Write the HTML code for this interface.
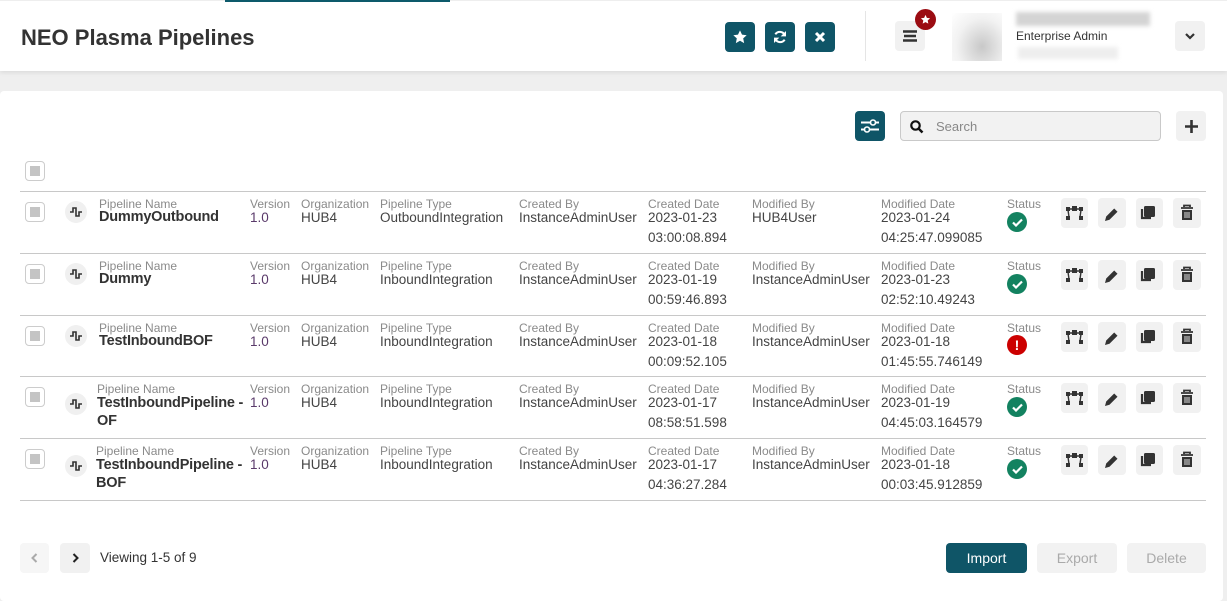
<!DOCTYPE html>
<html><head><meta charset="utf-8"><style>
*{box-sizing:border-box;margin:0;padding:0}
body{width:1227px;height:593px;background:#efefef;font-family:"Liberation Sans",sans-serif;position:relative;overflow:hidden;color:#333}
.hdr{position:absolute;left:0;top:1px;width:1227px;height:70px;background:#fff;box-shadow:0 2px 4px rgba(0,0,0,.08)}
.tl{position:absolute;left:225px;top:0;width:225px;height:2px;background:#0d5a6b}
h1{position:absolute;left:21px;top:24px;font-size:22px;font-weight:bold;color:#333}
.tb{position:absolute;top:21px;width:30px;height:30px;border-radius:4px;background:#0f5567;display:flex;align-items:center;justify-content:center}
.gb{position:absolute;background:#f1f1f1;border-radius:4px;display:flex;align-items:center;justify-content:center}
.card{position:absolute;left:0;top:91px;width:1223px;height:510px;background:#fff;border-radius:4px}
.a{position:absolute;white-space:nowrap}
.l{font-size:12px;color:#8a8a8a}
.v{font-size:13.5px;color:#444;line-height:20px}
.n{font-size:14.5px;color:#333;font-weight:bold;letter-spacing:-.2px}
.hr{position:absolute;left:20px;width:1186px;height:1px;background:#c8c8c8}
.cb{position:absolute;left:25px;width:20px;height:20px;border:1px solid #ccc;border-radius:4px;background:#fff}
.cb:after{content:"";position:absolute;left:4px;top:4px;width:10px;height:10px;background:#c4c4c4}
.ic{position:absolute;width:22px;height:22px;border-radius:50%;background:#f0f0f0;display:flex;align-items:center;justify-content:center}
.ok{position:absolute;left:1007px;width:20px;height:20px;border-radius:50%;background:#138260;display:flex;align-items:center;justify-content:center}
.er{position:absolute;left:1007px;width:20px;height:20px;border-radius:50%;background:#c00;color:#fff;font-weight:bold;font-size:14px;text-align:center;line-height:20px}
.ver{color:#5a3a6a}
</style></head><body>
<div class="hdr">
<h1>NEO Plasma Pipelines</h1>
<div class="tb" style="left:725px"><svg width="16" height="16" viewBox="0 0 24 24"><path fill="#fff" d="M12 2l3 6.5 7 .8-5.2 4.8 1.4 7L12 17.6 5.8 21.1l1.4-7L2 9.3l7-.8z"/></svg></div>
<div class="tb" style="left:765px"><svg width="16" height="16" viewBox="0 0 24 24" fill="none" stroke="#fff" stroke-width="3"><path d="M19 9A8 8 0 0 0 5 8M5 15a8 8 0 0 0 14 1"/><path fill="#fff" stroke="none" d="M21 3v8h-8zM3 21v-8h8z"/></svg></div>
<div class="tb" style="left:805px"><svg width="12" height="12" viewBox="0 0 12 12" stroke="#fff" stroke-width="3"><path d="M2 2l8 8M10 2l-8 8"/></svg></div>
<div style="position:absolute;left:865px;top:10px;width:1px;height:50px;background:#e5e5e5"></div>
<div class="gb" style="left:895px;top:20px;width:30px;height:30px"><svg width="14" height="12"><path d="M0 1.5h14M1 6h12M0 10.5h14" stroke="#333" stroke-width="2.5"/></svg></div>
<div style="position:absolute;left:915px;top:8px;width:21px;height:21px;border-radius:50%;background:#9b0c12;display:flex;align-items:center;justify-content:center"><svg width="11" height="11" viewBox="0 0 24 24"><path fill="#fff" d="M12 2l3 6.5 7 .8-5.2 4.8 1.4 7L12 17.6 5.8 21.1l1.4-7L2 9.3l7-.8z"/></svg></div>
<div style="position:absolute;left:952px;top:12px;width:50px;height:48px;background:radial-gradient(ellipse at 60% 70%,#c8c8c8,#f2f2f2 60%,#fff)"></div>
<div style="position:absolute;left:1016px;top:11px;width:134px;height:14px;background:#d4d4d4;filter:blur(2px)"></div>
<div class="a" style="left:1016px;top:28px;font-size:12px;color:#333">Enterprise Admin</div>
<div style="position:absolute;left:1018px;top:46px;width:100px;height:12px;background:#eee;filter:blur(2px)"></div>
<div class="gb" style="left:1175px;top:20px;width:30px;height:30px"><svg width="10" height="7"><path d="M1 1l4 4 4-4" stroke="#333" stroke-width="2.2" fill="none"/></svg></div>
</div>
<div class="tl"></div>
<div class="card">
<div class="tb" style="left:855px;top:20px"><svg width="18" height="14"><path d="M0 3.5h18M0 10.5h18" stroke="#fff" stroke-width="2"/><circle cx="12" cy="3.5" r="2.5" fill="#0f5567" stroke="#fff" stroke-width="1.6"/><circle cx="6" cy="10.5" r="2.5" fill="#0f5567" stroke="#fff" stroke-width="1.6"/></svg></div>
<div style="position:absolute;left:900px;top:20px;width:261px;height:30px;border:1px solid #c9c9c9;border-radius:4px;background:#f2f2f2"><svg style="position:absolute;left:9px;top:8px" width="14" height="14"><circle cx="5.5" cy="5.5" r="4.2" stroke="#111" stroke-width="2.2" fill="none"/><path d="M8.5 8.5l4 4" stroke="#111" stroke-width="2.5"/></svg><span class="a" style="left:35px;top:7px;font-size:13px;color:#888">Search</span></div>
<div class="gb" style="left:1176px;top:20px;width:30px;height:30px"><svg width="13" height="13"><path d="M6.5 0v13M0 6.5h13" stroke="#333" stroke-width="2.6"/></svg></div>
<div class="cb" style="top:70px"></div>
</div>

<div class="hr" style="top:191px"></div>
<div class="hr" style="top:253px"></div>
<div class="hr" style="top:315px"></div>
<div class="hr" style="top:376px"></div>
<div class="hr" style="top:438px"></div>
<div class="hr" style="top:500px"></div>

<!-- row 1 -->
<div class="cb" style="top:202px"></div>
<div class="ic" style="left:65px;top:201px"><svg width="12" height="10"><path d="M0 5h3V1h3v8h3V5h3" stroke="#333" stroke-width="1.6" fill="none"/></svg></div>
<div class="a l" style="left:99px;top:197px">Pipeline Name</div><div class="a n" style="left:99px;top:209px">DummyOutbound</div>
<div class="a l" style="left:250px;top:197px">Version</div><div class="a v ver" style="left:250px;top:208px">1.0</div>
<div class="a l" style="left:301px;top:197px">Organization</div><div class="a v" style="left:301px;top:208px">HUB4</div>
<div class="a l" style="left:380px;top:197px">Pipeline Type</div><div class="a v" style="left:380px;top:208px">OutboundIntegration</div>
<div class="a l" style="left:519px;top:197px">Created By</div><div class="a v" style="left:519px;top:208px">InstanceAdminUser</div>
<div class="a l" style="left:648px;top:197px">Created Date</div><div class="a v" style="left:648px;top:208px">2023-01-23<br>03:00:08.894</div>
<div class="a l" style="left:752px;top:197px">Modified By</div><div class="a v" style="left:752px;top:208px">HUB4User</div>
<div class="a l" style="left:881px;top:197px">Modified Date</div><div class="a v" style="left:881px;top:208px">2023-01-24<br>04:25:47.099085</div>
<div class="a l" style="left:1007px;top:197px">Status</div><div class="ok" style="top:212px"><svg width="11" height="9"><path d="M1 4.5l3 3 6-6" stroke="#fff" stroke-width="2.2" fill="none"/></svg></div>

<!-- row 2 -->
<div class="cb" style="top:264px"></div>
<div class="ic" style="left:65px;top:263px"><svg width="12" height="10"><path d="M0 5h3V1h3v8h3V5h3" stroke="#333" stroke-width="1.6" fill="none"/></svg></div>
<div class="a l" style="left:99px;top:259px">Pipeline Name</div><div class="a n" style="left:99px;top:271px">Dummy</div>
<div class="a l" style="left:250px;top:259px">Version</div><div class="a v ver" style="left:250px;top:270px">1.0</div>
<div class="a l" style="left:301px;top:259px">Organization</div><div class="a v" style="left:301px;top:270px">HUB4</div>
<div class="a l" style="left:380px;top:259px">Pipeline Type</div><div class="a v" style="left:380px;top:270px">InboundIntegration</div>
<div class="a l" style="left:519px;top:259px">Created By</div><div class="a v" style="left:519px;top:270px">InstanceAdminUser</div>
<div class="a l" style="left:648px;top:259px">Created Date</div><div class="a v" style="left:648px;top:270px">2023-01-19<br>00:59:46.893</div>
<div class="a l" style="left:752px;top:259px">Modified By</div><div class="a v" style="left:752px;top:270px">InstanceAdminUser</div>
<div class="a l" style="left:881px;top:259px">Modified Date</div><div class="a v" style="left:881px;top:270px">2023-01-23<br>02:52:10.49243</div>
<div class="a l" style="left:1007px;top:259px">Status</div><div class="ok" style="top:274px"><svg width="11" height="9"><path d="M1 4.5l3 3 6-6" stroke="#fff" stroke-width="2.2" fill="none"/></svg></div>

<!-- row 3 -->
<div class="cb" style="top:326px"></div>
<div class="ic" style="left:65px;top:325px"><svg width="12" height="10"><path d="M0 5h3V1h3v8h3V5h3" stroke="#333" stroke-width="1.6" fill="none"/></svg></div>
<div class="a l" style="left:99px;top:321px">Pipeline Name</div><div class="a n" style="left:99px;top:333px">TestInboundBOF</div>
<div class="a l" style="left:250px;top:321px">Version</div><div class="a v ver" style="left:250px;top:332px">1.0</div>
<div class="a l" style="left:301px;top:321px">Organization</div><div class="a v" style="left:301px;top:332px">HUB4</div>
<div class="a l" style="left:380px;top:321px">Pipeline Type</div><div class="a v" style="left:380px;top:332px">InboundIntegration</div>
<div class="a l" style="left:519px;top:321px">Created By</div><div class="a v" style="left:519px;top:332px">InstanceAdminUser</div>
<div class="a l" style="left:648px;top:321px">Created Date</div><div class="a v" style="left:648px;top:332px">2023-01-18<br>00:09:52.105</div>
<div class="a l" style="left:752px;top:321px">Modified By</div><div class="a v" style="left:752px;top:332px">InstanceAdminUser</div>
<div class="a l" style="left:881px;top:321px">Modified Date</div><div class="a v" style="left:881px;top:332px">2023-01-18<br>01:45:55.746149</div>
<div class="a l" style="left:1007px;top:321px">Status</div><div class="er" style="top:335px">!</div>

<!-- row 4 -->
<div class="cb" style="top:387px"></div>
<div class="ic" style="left:65px;top:393px"><svg width="12" height="10"><path d="M0 5h3V1h3v8h3V5h3" stroke="#333" stroke-width="1.6" fill="none"/></svg></div>
<div class="a l" style="left:97px;top:382px">Pipeline Name</div><div class="a n" style="left:97px;top:394px;line-height:18px">TestInboundPipeline -<br>OF</div>
<div class="a l" style="left:250px;top:382px">Version</div><div class="a v ver" style="left:250px;top:393px">1.0</div>
<div class="a l" style="left:301px;top:382px">Organization</div><div class="a v" style="left:301px;top:393px">HUB4</div>
<div class="a l" style="left:380px;top:382px">Pipeline Type</div><div class="a v" style="left:380px;top:393px">InboundIntegration</div>
<div class="a l" style="left:519px;top:382px">Created By</div><div class="a v" style="left:519px;top:393px">InstanceAdminUser</div>
<div class="a l" style="left:648px;top:382px">Created Date</div><div class="a v" style="left:648px;top:393px">2023-01-17<br>08:58:51.598</div>
<div class="a l" style="left:752px;top:382px">Modified By</div><div class="a v" style="left:752px;top:393px">InstanceAdminUser</div>
<div class="a l" style="left:881px;top:382px">Modified Date</div><div class="a v" style="left:881px;top:393px">2023-01-19<br>04:45:03.164579</div>
<div class="a l" style="left:1007px;top:382px">Status</div><div class="ok" style="top:397px"><svg width="11" height="9"><path d="M1 4.5l3 3 6-6" stroke="#fff" stroke-width="2.2" fill="none"/></svg></div>

<!-- row 5 -->
<div class="cb" style="top:449px"></div>
<div class="ic" style="left:65px;top:455px"><svg width="12" height="10"><path d="M0 5h3V1h3v8h3V5h3" stroke="#333" stroke-width="1.6" fill="none"/></svg></div>
<div class="a l" style="left:96px;top:444px">Pipeline Name</div><div class="a n" style="left:96px;top:456px;line-height:18px">TestInboundPipeline -<br>BOF</div>
<div class="a l" style="left:250px;top:444px">Version</div><div class="a v ver" style="left:250px;top:455px">1.0</div>
<div class="a l" style="left:301px;top:444px">Organization</div><div class="a v" style="left:301px;top:455px">HUB4</div>
<div class="a l" style="left:380px;top:444px">Pipeline Type</div><div class="a v" style="left:380px;top:455px">InboundIntegration</div>
<div class="a l" style="left:519px;top:444px">Created By</div><div class="a v" style="left:519px;top:455px">InstanceAdminUser</div>
<div class="a l" style="left:648px;top:444px">Created Date</div><div class="a v" style="left:648px;top:455px">2023-01-17<br>04:36:27.284</div>
<div class="a l" style="left:752px;top:444px">Modified By</div><div class="a v" style="left:752px;top:455px">InstanceAdminUser</div>
<div class="a l" style="left:881px;top:444px">Modified Date</div><div class="a v" style="left:881px;top:455px">2023-01-18<br>00:03:45.912859</div>
<div class="a l" style="left:1007px;top:444px">Status</div><div class="ok" style="top:459px"><svg width="11" height="9"><path d="M1 4.5l3 3 6-6" stroke="#fff" stroke-width="2.2" fill="none"/></svg></div>

<!-- action buttons -->
<svg style="position:absolute;left:0;top:0" width="1227" height="593">
<defs>
<g id="acts">
<rect x="1061" y="0" width="27" height="30" rx="4" fill="#f1f1f1"/>
<g fill="#333"><rect x="1066" y="9" width="4" height="4"/><rect x="1072" y="8" width="5" height="5"/><rect x="1079" y="9" width="4" height="4"/><rect x="1066" y="18" width="4" height="4"/><rect x="1079" y="18" width="4" height="4"/></g>
<path d="M1068 12l1 7M1081 12l-1 7M1070 11h9" stroke="#333" stroke-width="1.4"/>
<rect x="1098" y="0" width="28" height="30" rx="4" fill="#f1f1f1"/>
<path d="M1105 23l1.2-4.5 8-8 3.3 3.3-8 8z" fill="#333"/>
<rect x="1136" y="0" width="27" height="30" rx="4" fill="#f1f1f1"/>
<rect x="1144" y="8" width="11" height="11" rx="1.5" fill="#333"/><path d="M1142 11v9h9" stroke="#333" stroke-width="2.2" fill="none"/>
<rect x="1173" y="0" width="28" height="30" rx="4" fill="#f1f1f1"/>
<path d="M1181 10h12M1184 9v-1.5h6V9" stroke="#333" stroke-width="1.8" fill="none"/>
<path d="M1182 12h10v10h-10z" fill="#333"/><path d="M1185 14v6M1187 14v6M1189 14v6" stroke="#f1f1f1" stroke-width=".9"/>
</g>
</defs>
<use href="#acts" y="198"/>
<use href="#acts" y="260"/>
<use href="#acts" y="322"/>
<use href="#acts" y="383"/>
<use href="#acts" y="445"/>
</svg>

<!-- footer -->
<div class="gb" style="left:20px;top:543px;width:29px;height:30px;background:#f6f6f6"><svg width="7" height="10"><path d="M5.5 1L1.5 5l4 4" stroke="#aaa" stroke-width="2" fill="none"/></svg></div>
<div class="gb" style="left:60px;top:543px;width:30px;height:30px"><svg width="7" height="10"><path d="M1.5 1l4 4-4 4" stroke="#222" stroke-width="2" fill="none"/></svg></div>
<div class="a" style="left:100px;top:550px;font-size:13.5px;color:#333">Viewing 1-5 of 9</div>
<div style="position:absolute;left:946px;top:543px;width:81px;height:30px;background:#0f5567;border-radius:4px;color:#fff;font-size:14px;text-align:center;line-height:30px">Import</div>
<div style="position:absolute;left:1037px;top:543px;width:80px;height:30px;background:#f2f2f2;border-radius:4px;color:#aaa;font-size:14px;text-align:center;line-height:30px">Export</div>
<div style="position:absolute;left:1127px;top:543px;width:79px;height:30px;background:#f2f2f2;border-radius:4px;color:#aaa;font-size:14px;text-align:center;line-height:30px">Delete</div>
</body></html>
